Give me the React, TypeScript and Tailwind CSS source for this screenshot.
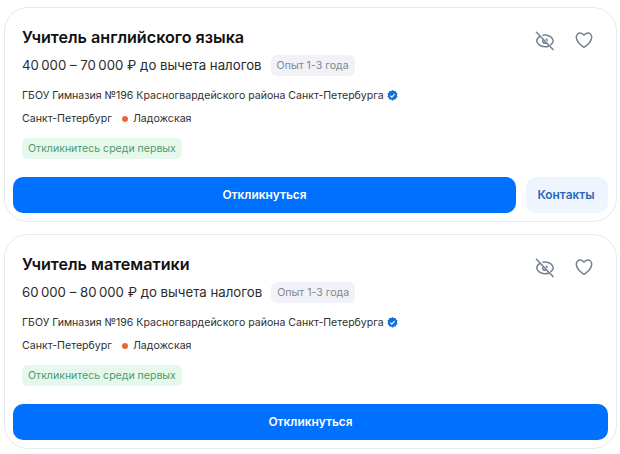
type Vacancy = {
  id: number;
  title: string;
  salary: string;
  experience: string;
  company: string;
  city: string;
  metro: string;
  hasContacts: boolean;
};

const vacancies: Vacancy[] = [
  {
    id: 1,
    title: "Учитель английского языка",
    salary: "40\u2009000 – 70\u2009000 ₽ до вычета налогов",
    experience: "Опыт 1-3 года",
    company: "ГБОУ Гимназия №196 Красногвардейского района Санкт-Петербурга",
    city: "Санкт-Петербург",
    metro: "Ладожская",
    hasContacts: true,
  },
  {
    id: 2,
    title: "Учитель математики",
    salary: "60\u2009000 – 80\u2009000 ₽ до вычета налогов",
    experience: "Опыт 1-3 года",
    company: "ГБОУ Гимназия №196 Красногвардейского района Санкт-Петербурга",
    city: "Санкт-Петербург",
    metro: "Ладожская",
    hasContacts: false,
  },
];

const HideIcon = () => (
  <svg width="20" height="20" viewBox="0 0 20 20" fill="none" stroke="#74808f" strokeWidth="1.5" strokeLinecap="round">
    <path d="M5 5.400C3 6.600 1.800 8.300 1.800 9.900c0 2.900 3.600 5.900 8.200 5.900 1.400 0 2.700-.3 3.800-.8" />
    <path d="M8 4.200c.6-.1 1.300-.2 2-.2 4.600 0 8.200 3 8.200 5.900 0 1.300-.9 2.700-2.300 3.800" />
    <path d="M8 9a2.200 2.200 0 0 0 3 3M11.200 8.200a2.200 2.200 0 0 1 1 1.200" />
    <path d="M1.400 1.300 18 18.600" />
  </svg>
);

const HeartIcon = () => (
  <svg width="18" height="17" viewBox="0 0 18 17" fill="none" stroke="#74808f" strokeWidth="1.5" strokeLinejoin="round">
    <path d="M9 3.200C8 1.700 6.800 1 5.300 1 3 1 1.300 2.800 1.300 5.200c0 4 4 7.600 7.700 10.300 3.700-2.700 7.700-6.300 7.700-10.300C16.700 2.800 15 1 12.700 1 11.200 1 10 1.700 9 3.200Z" />
  </svg>
);

const VerifiedIcon = () => (
  <svg width="11" height="11" viewBox="0 0 11 11">
    <path
      d="M5.500 0l1.400 1 1.700-.1.500 1.600 1.400 1-.6 1.600.6 1.900-1.400 1-.5 1.600-1.700-.1-1.400 1.300-1.400-1.300-1.700.1-.5-1.600-1.400-1 .6-1.900-.6-1.600 1.400-1L2.400.9l1.700.1z"
      fill="#0f6fdc"
    />
    <path d="M3.300 5.700l1.500 1.400 2.800-3" fill="none" stroke="#fff" strokeWidth="1.100" />
  </svg>
);

const VacancyCard = ({ vacancy }: { vacancy: Vacancy }) => {
  return (
    <div className="flex h-[215px] flex-col rounded-[24px] border border-[#e6eaee] bg-white pt-[17px] pr-[8px] pl-[8px]">
      <div className="flex justify-between pr-[15px] pl-[9px]">
        <div>
          <h2 className="h-[24px] text-[16.15px] leading-[24px] font-semibold whitespace-nowrap text-[#111]">
            {vacancy.title}
          </h2>
          <div className="mt-[5px] flex h-[22px] items-center gap-[9px]">
            <p className="text-[13.23px] leading-[22px] whitespace-nowrap text-[#2b2b2b]">{vacancy.salary}</p>
            <span className="h-[21px] rounded-[6px] bg-[#f1f2f7] px-[6px] text-[10.6px] leading-[21px] whitespace-nowrap text-[#82868f]">
              {vacancy.experience}
            </span>
          </div>
        </div>
        <div className="flex h-[31px] items-center gap-[20px]">
          <HideIcon />
          <HeartIcon />
        </div>
      </div>

      <div className="mt-[11px] flex h-[17px] items-center gap-[3px] pl-[9px] text-[10.55px] whitespace-nowrap text-[#303030]">
        <span>{vacancy.company}</span>
        <VerifiedIcon />
      </div>
      <div className="mt-[6px] flex h-[17px] items-center pl-[9px] text-[10.6px] whitespace-nowrap text-[#303030]">
        <span>{vacancy.city}</span>
        <span className="mr-[5px] ml-[10px] size-[6px] rounded-full bg-[#e8663c]" />
        <span>{vacancy.metro}</span>
      </div>
      <span className="mt-[11px] ml-[9px] h-[21px] self-start rounded-[6px] bg-[#e6f8ec] px-[6px] text-[10.55px] leading-[21px] whitespace-nowrap text-[#4d9a6c]">
        Откликнитесь среди первых
      </span>

      <div className="mt-[18px] flex gap-[10px]">
        <button className="h-[36px] flex-1 rounded-[10px] bg-[#0070ff] text-[11.9px] font-semibold text-white">
          Откликнуться
        </button>
        {vacancy.hasContacts && (
          <button className="h-[36px] w-[82px] rounded-[10px] bg-[#eff5fe] pr-[2px] text-[11.9px] font-semibold text-[#2a69b4]">
            Контакты
          </button>
        )}
      </div>
    </div>
  );
};

const App = () => {
  return (
    <div className="flex h-[454px] w-[620px] flex-col gap-[12px] bg-white pt-[7px] pr-[3px] pl-[4px] font-[Inter,sans-serif]">
      {vacancies.map((vacancy) => (
        <VacancyCard key={vacancy.id} vacancy={vacancy} />
      ))}
    </div>
  );
};

export default App;
